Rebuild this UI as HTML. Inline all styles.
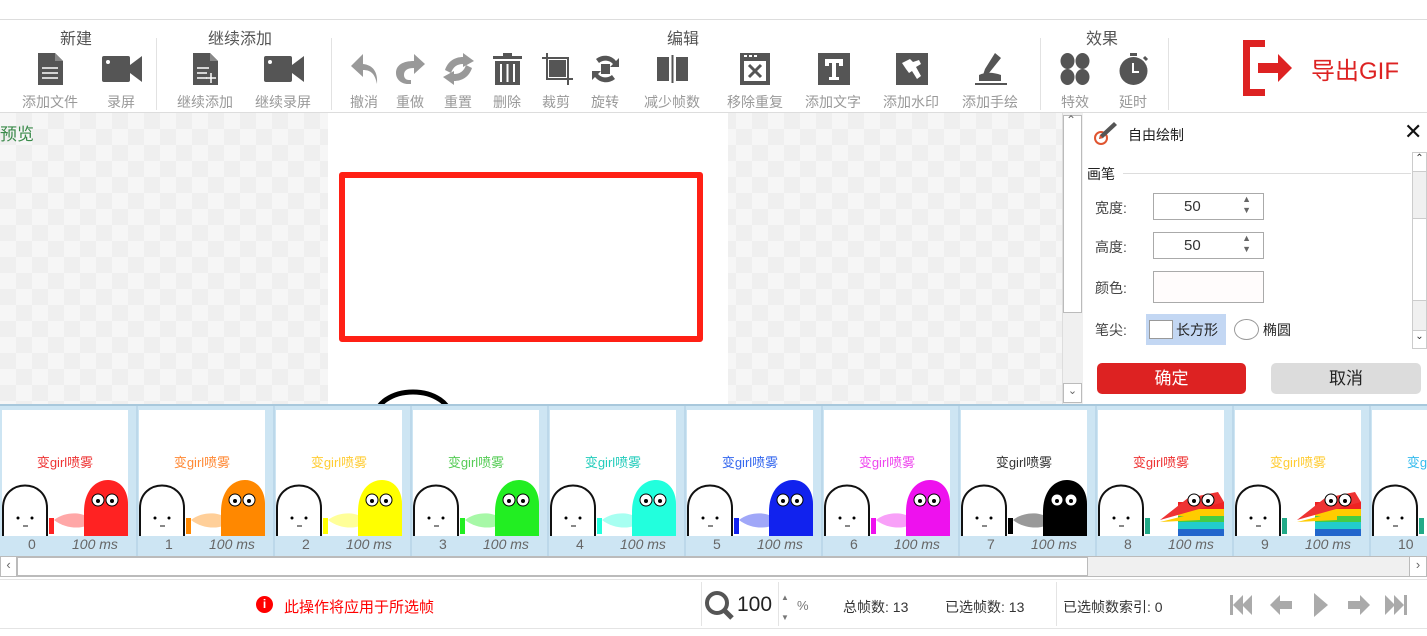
<!DOCTYPE html>
<html><head><meta charset="utf-8"><style>
*{margin:0;padding:0;box-sizing:border-box}
body{width:1427px;height:636px;position:relative;overflow:hidden;background:#fff;font-family:"Liberation Sans","Noto Sans CJK SC",sans-serif;color:#333}
.a{position:absolute}
.gt{position:absolute;top:25px;font-size:16px;color:#555;text-align:center}
.lb{position:absolute;top:92px;font-size:14px;color:#999;text-align:center;width:80px}
.ic{position:absolute;top:53px}
.sep{position:absolute;top:38px;width:1px;height:72px;background:#e2e2e2}
.fr{position:absolute;top:410px;width:126px;height:126px;background:#fff;overflow:hidden}
.fn{position:absolute;top:536px;font-size:14px;color:#666}
.fm{position:absolute;top:536px;font-size:14px;color:#666;font-style:italic}
</style></head><body>
<div class="a" style="left:0;top:19px;width:1427px;height:1px;background:#ddd"></div>
<div class="a" style="left:0;top:112px;width:1427px;height:1px;background:#ddd"></div>
<div class="gt" style="left:60px">新建</div>
<div class="gt" style="left:208px">继续添加</div>
<div class="gt" style="left:667px">编辑</div>
<div class="gt" style="left:1086px">效果</div>
<div class="sep" style="left:156px"></div><div class="sep" style="left:331px"></div><div class="sep" style="left:1040px"></div><div class="sep" style="left:1168px"></div>
<div class="lb" style="left:10px">添加文件</div>
<div class="lb" style="left:81px">录屏</div>
<div class="lb" style="left:165px">继续添加</div>
<div class="lb" style="left:243px">继续录屏</div>
<div class="lb" style="left:324px">撤消</div>
<div class="lb" style="left:370px">重做</div>
<div class="lb" style="left:418px">重置</div>
<div class="lb" style="left:467px">删除</div>
<div class="lb" style="left:516px">裁剪</div>
<div class="lb" style="left:565px">旋转</div>
<div class="lb" style="left:632px">减少帧数</div>
<div class="lb" style="left:715px">移除重复</div>
<div class="lb" style="left:793px">添加文字</div>
<div class="lb" style="left:871px">添加水印</div>
<div class="lb" style="left:950px">添加手绘</div>
<div class="lb" style="left:1035px">特效</div>
<div class="lb" style="left:1093px">延时</div>
<svg class="ic" style="left:38px" width="26" height="32"><path d="M0 0h17l8 8v24H0z" fill="#555"/><path d="M17 0v8h8" fill="#888"/><path d="M4 15h16M4 20h16M4 25h16" stroke="#fff" stroke-width="1.5"/></svg>
<svg class="ic" style="left:102px;top:56px" width="40" height="26"><rect x="0" y="0" width="28" height="26" rx="2" fill="#555"/><path d="M28 9l12-9v26l-12-9z" fill="#555"/><circle cx="6" cy="6" r="2" fill="#fff"/></svg>
<svg class="ic" style="left:193px" width="26" height="32"><path d="M0 0h17l8 8v24H0z" fill="#555"/><path d="M17 0v8h8" fill="#888"/><path d="M4 15h12M4 20h10M4 25h10" stroke="#fff" stroke-width="1.5"/><path d="M18 20v10M13 25h10" stroke="#fff" stroke-width="1.5"/></svg>
<svg class="ic" style="left:264px;top:56px" width="40" height="26"><rect x="0" y="0" width="28" height="26" rx="2" fill="#555"/><path d="M28 9l12-9v26l-12-9z" fill="#555"/><circle cx="6" cy="6" r="2" fill="#fff"/></svg>
<svg class="ic" style="left:351px;top:54px" width="28" height="30"><path d="M12 0L0 12l12 11v-7c8 0 12 4 14 14 1-12-4-19-14-20z" fill="#999"/></svg>
<svg class="ic" style="left:396px;top:54px" width="30" height="30"><path d="M18 0l11 10-11 10v-6c-6 0-10 2-10 7 0 3 2 5 5 5h2v4h-3C5 30 0 25 0 19 0 11 7 7 18 7z" fill="#999"/></svg>
<svg class="ic" style="left:443px" width="31" height="32"><path d="M20 0l11 8-11 6v-3c-6 0-10 3-12 9l-6-3C5 8 12 4 20 4z" fill="#999"/><path d="M11 32L0 24l11-6v3c6 0 10-3 12-9l6 3c-3 9-10 13-18 13z" fill="#999"/></svg>
<svg class="ic" style="left:493px" width="29" height="32"><rect x="0" y="3" width="29" height="3" fill="#555"/><rect x="10" y="0" width="9" height="3" fill="#555"/><rect x="2" y="8" width="25" height="24" fill="#555"/><path d="M8 11v18M14.5 11v18M21 11v18" stroke="#fff" stroke-width="2"/></svg>
<svg class="ic" style="left:542px" width="31" height="32"><path d="M5 0v26h26M0 5h26v27" stroke="#555" stroke-width="2" fill="none"/><rect x="7" y="7" width="17" height="17" fill="#555"/></svg>
<svg class="ic" style="left:590px" width="31" height="32"><path d="M6 6a14 14 0 0 1 20 2l3-3v9h-9l3-3a10 10 0 0 0-14-1zM25 26a14 14 0 0 1-20-2l-3 3v-9h9l-3 3a10 10 0 0 0 14 1z" fill="#555"/><rect x="11" y="11" width="9" height="10" fill="#555"/></svg>
<svg class="ic" style="left:657px;top:55px" width="31" height="28"><rect x="0" y="2" width="12" height="24" fill="#555"/><rect x="19" y="2" width="12" height="24" fill="#555"/><rect x="14.5" y="0" width="2" height="28" fill="#555"/></svg>
<svg class="ic" style="left:740px" width="30" height="32"><rect x="0" y="0" width="30" height="32" fill="#555"/><rect x="4" y="8" width="22" height="20" fill="#fff"/><path d="M4 3h3M9 3h3M14 3h3" stroke="#fff" stroke-width="2"/><path d="M9 12l12 12M21 12L9 24" stroke="#555" stroke-width="3"/></svg>
<svg class="ic" style="left:818px" width="32" height="32"><rect width="32" height="32" fill="#555"/><path d="M7 6h18v7h-4v-3h-3v14h3v3H11v-3h3V10h-3v3H7z" fill="#fff"/></svg>
<svg class="ic" style="left:896px" width="32" height="32"><rect width="32" height="32" fill="#555"/><path d="M6 10l8-4 3 3 6-2 2 4-5 3 5 9-4 3-5-8-3 2-3-4z" fill="#fff"/></svg>
<svg class="ic" style="left:975px" width="32" height="32"><path d="M20 0l6 5-12 15-6 2 2-6z" fill="#555"/><path d="M4 22c6-3 14-3 22 0v6H4z" fill="#555"/><path d="M0 31h32" stroke="#555" stroke-width="2"/></svg>
<svg class="ic" style="left:1060px" width="30" height="32"><ellipse cx="7.5" cy="8" rx="7" ry="8" fill="#555"/><ellipse cx="22.5" cy="8" rx="7" ry="8" fill="#555"/><ellipse cx="7.5" cy="24" rx="7" ry="8" fill="#555"/><ellipse cx="22.5" cy="24" rx="7" ry="8" fill="#555"/></svg>
<svg class="ic" style="left:1118px" width="31" height="32"><rect x="12" y="0" width="7" height="3" fill="#555"/><circle cx="15.5" cy="18" r="14" fill="#555"/><path d="M15 10v9h6" stroke="#fff" stroke-width="2" fill="none"/><path d="M26 4l3 3" stroke="#555" stroke-width="3"/></svg>
<svg class="a" style="left:1243px;top:40px" width="56" height="56"><path d="M0 0h22v7H7v42h15v7H0z" fill="#dd2222"/><path d="M15 23h20v-9l14 14-14 14v-9H15z" fill="#dd2222"/></svg>
<div class="a" style="left:1311px;top:51px;font-size:24px;color:#dd2222">导出GIF</div>
<div class="a" style="left:0;top:113px;width:1062px;height:291px;background-color:#f6f6f6;background-image:linear-gradient(45deg,#efefef 25%,transparent 25%,transparent 75%,#efefef 75%),linear-gradient(45deg,#efefef 25%,transparent 25%,transparent 75%,#efefef 75%);background-size:32px 32px;background-position:0 0,16px 16px"></div>
<div class="a" style="left:0;top:120px;font-size:17px;color:#3a8a4a">预览</div>
<div class="a" style="left:328px;top:113px;width:400px;height:291px;background:#fff;overflow:hidden">
<div class="a" style="left:11px;top:59px;width:364px;height:170px;border:6px solid #ff2015;border-radius:3px"></div>
<svg class="a" style="left:25px;top:275px" width="100" height="20"><ellipse cx="60" cy="30" rx="38" ry="26" fill="none" stroke="#000" stroke-width="5"/></svg>
</div>
<div class="a" style="left:1062px;top:113px;width:21px;height:291px;background:#f0f0f0;border-left:1px solid #ddd"></div>
<div class="a" style="left:1063px;top:115px;width:19px;height:198px;background:#fff;border:1px solid #bbb"></div>
<div class="a" style="left:1066px;top:113px;font-size:12px;color:#666">&#8963;</div>
<div class="a" style="left:1063px;top:383px;width:19px;height:20px;border:1px solid #bbb;background:#fff;font-size:11px;text-align:center;color:#666">&#8964;</div>
<div class="a" style="left:1083px;top:113px;width:344px;height:291px;background:#fff"></div>
<svg class="a" style="left:1092px;top:120px" width="26" height="26"><circle cx="9" cy="18" r="6" fill="none" stroke="#e05530" stroke-width="2"/><path d="M22 2l3 3-14 13-4 1 1-4z" fill="#555"/><path d="M7 19l4-1-3-3z" fill="#e05530"/></svg>
<div class="a" style="left:1128px;top:125px;font-size:14px;color:#222">自由绘制</div>
<div class="a" style="left:1404px;top:119px;font-size:22px;color:#111">✕</div>
<div class="a" style="left:1087px;top:164px;font-size:14px;color:#222">画笔</div>
<div class="a" style="left:1123px;top:173px;width:288px;height:1px;background:#ddd"></div>
<div class="a" style="left:1412px;top:152px;width:15px;height:197px;background:#f0f0f0;border:1px solid #ccc"></div>
<div class="a" style="left:1412px;top:152px;width:15px;height:20px;border:1px solid #ccc;background:#fff;font-size:10px;text-align:center">&#8963;</div>
<div class="a" style="left:1412px;top:218px;width:15px;height:83px;border:1px solid #ccc;background:#fff"></div>
<div class="a" style="left:1412px;top:330px;width:15px;height:19px;border:1px solid #ccc;background:#fff;font-size:10px;text-align:center">&#8964;</div>
<div class="a" style="left:1095px;top:198px;font-size:14px;color:#444">宽度:</div>
<div class="a" style="left:1095px;top:237px;font-size:14px;color:#444">高度:</div>
<div class="a" style="left:1095px;top:278px;font-size:14px;color:#444">颜色:</div>
<div class="a" style="left:1095px;top:320px;font-size:14px;color:#444">笔尖:</div>
<div class="a" style="left:1153px;top:193px;width:111px;height:27px;border:1px solid #aaa;font-size:15px;padding:4px 0 0 30px">50<span style="position:absolute;right:12px;top:0;font-size:9px;line-height:11px;color:#666">▲<br>▼</span></div>
<div class="a" style="left:1153px;top:232px;width:111px;height:27px;border:1px solid #aaa;font-size:15px;padding:4px 0 0 30px">50<span style="position:absolute;right:12px;top:0;font-size:9px;line-height:11px;color:#666">▲<br>▼</span></div>
<div class="a" style="left:1153px;top:271px;width:111px;height:32px;border:1px solid #aaa;background:#fffcfc"></div>
<div class="a" style="left:1146px;top:314px;width:80px;height:31px;background:#c3d7f3"></div>
<div class="a" style="left:1149px;top:320px;width:24px;height:19px;border:1px solid #999;background:#fff"></div>
<div class="a" style="left:1176px;top:320px;font-size:14px;color:#222">长方形</div>
<div class="a" style="left:1234px;top:319px;width:25px;height:21px;border:1px solid #999;border-radius:50%"></div>
<div class="a" style="left:1263px;top:320px;font-size:14px;color:#222">椭圆</div>
<div class="a" style="left:1097px;top:363px;width:149px;height:31px;background:#dd2222;border-radius:5px;color:#fff;font-size:17px;text-align:center;line-height:31px">确定</div>
<div class="a" style="left:1271px;top:363px;width:150px;height:31px;background:#dcdcdc;border-radius:5px;color:#222;font-size:17px;text-align:center;line-height:31px">取消</div>
<div class="a" style="left:0;top:404px;width:1427px;height:152px;background:#cde5f3;border-top:2px solid #a8c8dc"></div>
<div id="frames"></div>
<div class="a" style="left:0;top:556px;width:1427px;height:21px;background:#f0f0f0;border-top:1px solid #bbb;border-bottom:1px solid #bbb"></div>
<div class="a" style="left:0;top:556px;width:17px;height:21px;background:#fff;border:1px solid #bbb;font-size:13px;color:#666;text-align:center">‹</div>
<div class="a" style="left:17px;top:557px;width:1071px;height:19px;background:#fff;border:1px solid #bbb"></div>
<div class="a" style="left:1409px;top:556px;width:18px;height:21px;background:#fff;border:1px solid #bbb;font-size:13px;color:#666;text-align:center">›</div>
<div class="a" style="left:0;top:579px;width:1427px;height:1px;background:#e4e4e4"></div>
<div class="a" style="left:0;top:628px;width:1427px;height:1px;background:#e4e4e4"></div>
<div class="a" style="left:256px;top:596px;width:17px;height:17px;border-radius:50%;background:#f00;color:#fff;font-size:12px;font-weight:bold;text-align:center;line-height:17px">i</div>
<div class="a" style="left:284px;top:596px;font-size:15px;color:#f00">此操作将应用于所选帧</div>
<div class="a" style="left:701px;top:582px;width:1px;height:44px;background:#e4e4e4"></div>
<div class="a" style="left:778px;top:582px;width:1px;height:44px;background:#e4e4e4"></div>
<div class="a" style="left:1056px;top:582px;width:1px;height:44px;background:#e4e4e4"></div>
<svg class="a" style="left:704px;top:590px" width="32" height="32"><circle cx="13" cy="13" r="10" fill="none" stroke="#555" stroke-width="4"/><path d="M20 20l8 8" stroke="#555" stroke-width="5"/></svg>
<div class="a" style="left:737px;top:593px;font-size:21px;color:#222">100</div>
<div class="a" style="left:781px;top:588px;font-size:8px;color:#777;line-height:20px">▲<br>▼</div>
<div class="a" style="left:797px;top:598px;font-size:13px;color:#777">%</div>
<div class="a" style="left:843px;top:597px;font-size:14px;color:#333">总帧数: 13</div>
<div class="a" style="left:945px;top:597px;font-size:14px;color:#333">已选帧数: 13</div>
<div class="a" style="left:1063px;top:597px;font-size:14px;color:#333">已选帧数索引: 0</div>
<svg class="a" style="left:1230px;top:593px" width="180" height="24"><g fill="#aaa"><rect x="0" y="2" width="3" height="20"/><path d="M3 12l10-10v20zM12 12l10-10v20z"/><path d="M40 12l10-10v6h12v8H50v6z"/><path d="M84 0l14 12-14 12z"/><path d="M140 12l-10-10v6h-12v8h12v6z"/><path d="M155 2l10 10-10 10zM164 2l10 10-10 10z"/><rect x="174" y="2" width="3" height="20"/></g></svg>
<script>
var cols=[['#e33','#f22'],['#f83','#f80'],['#fc3','#ff0'],['#5c5','#2e2'],['#2cb','#2fd'],['#36e','#12e'],['#e4e','#e1e'],['#333','#000'],['#e33','rb'],['#fc3','rb'],['#3be','rb']];
var h='';
for(var i=0;i<11;i++){var x=2+137*i;var c=cols[i];
var body=c[1]=='rb'?'<g><rect x="80" y="92" width="46" height="7" fill="#e22"/><rect x="80" y="99" width="46" height="7" fill="#fc0"/><rect x="80" y="106" width="46" height="6" fill="#4c4"/><rect x="80" y="112" width="46" height="7" fill="#2cc"/><rect x="80" y="119" width="46" height="7" fill="#26c"/><path d="M62 110l28-22 30-6 6 10z" fill="#e33"/><path d="M62 112l40-10v8z" fill="#fc0"/></g>':'<path d="M82 126v-24c0-22 12-32 24-32s20 10 20 24v32z" fill="'+c[1]+'"/><path d="M52 110c10-8 25-8 32-4v10c-8 3-22 2-32-6z" fill="'+c[1]+'" opacity=".4"/>';
h+='<div class="fr" style="left:'+x+'px"><svg width="126" height="126" style="position:absolute;left:0;top:0">'+body+'<circle cx="96" cy="90" r="6" fill="#fff" stroke="#000"/><circle cx="110" cy="90" r="6" fill="#fff" stroke="#000"/><circle cx="96" cy="91" r="2"/><circle cx="110" cy="91" r="2"/><path d="M1 128v-30c0-30 44-30 44 0v30" fill="#fff" stroke="#111" stroke-width="2"/><circle cx="16" cy="108" r="1.5"/><circle cx="30" cy="108" r="1.5"/><path d="M21 116h5" stroke="#111"/><rect x="47" y="108" width="5" height="16" fill="'+(c[1]=='rb'?'#2a8':c[1])+'"/></svg><div style="position:absolute;top:42px;width:126px;text-align:center;font-size:13px;color:'+c[0]+'">变girl喷雾</div></div>';
h+='<div class="fn" style="left:'+(x+26)+'px">'+i+'</div>';
if(i<10)h+='<div class="fm" style="left:'+(x+70)+'px">100 ms</div>';
h+='<div class="a" style="left:'+(x+134)+'px;top:406px;width:2px;height:150px;background:#bcd8ea"></div>';}
document.getElementById('frames').innerHTML=h;
</script>
</body></html>
